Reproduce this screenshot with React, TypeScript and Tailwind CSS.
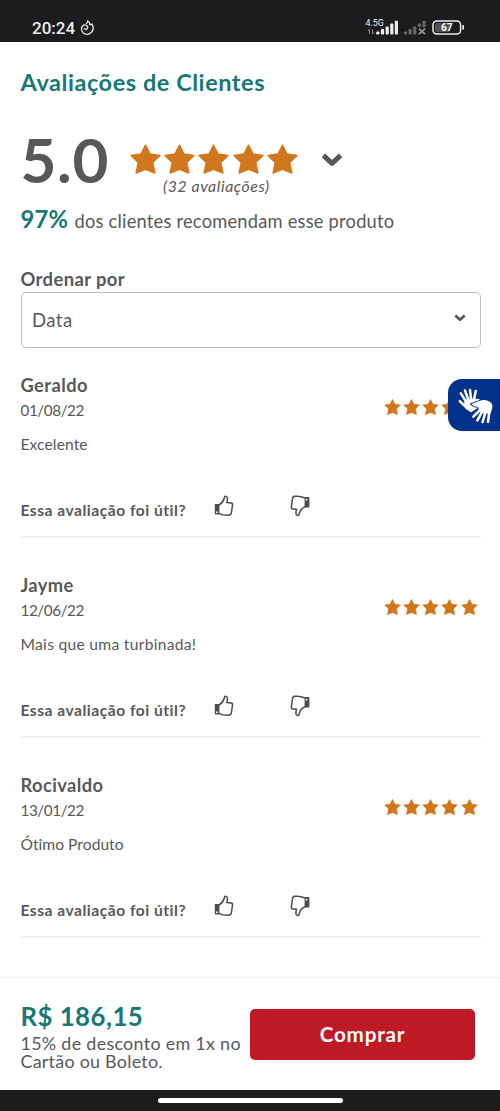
interface Review {
  name: string;
  date: string;
  text: string;
  nameClass: string;
  textClass: string;
}

const reviews: Review[] = [
  { name: "Geraldo", date: "01/08/22", text: "Excelente", nameClass: "tracking-[0.45px]", textClass: "tracking-[0.1px]" },
  { name: "Jayme", date: "12/06/22", text: "Mais que uma turbinada!", nameClass: "tracking-[0.35px]", textClass: "tracking-[0.3px]" },
  { name: "Rocivaldo", date: "13/01/22", text: "Ótimo Produto", nameClass: "tracking-[0.4px]", textClass: "tracking-[0.03px]" },
];

function Star({ className }: { className: string }) {
  return (
    <svg viewBox="0 0 31 30" className={className}>
      <path
        d="M15.5 1 L20.1 10 L30 11.4 L22.8 18.6 L24.9 29 L15.5 25.4 L6.1 29 L8.2 18.6 L1 11.4 L10.9 10 Z"
        fill="currentColor"
        stroke="currentColor"
        strokeWidth="1.4"
        strokeLinejoin="round"
      />
    </svg>
  );
}

function Chevron({ className }: { className: string }) {
  return (
    <svg viewBox="0 0 22 14" className={className} fill="none" stroke="#58585a" strokeWidth="5" strokeLinejoin="round">
      <path d="M2.4 2.4 L11 10.4 L19.6 2.4" />
    </svg>
  );
}

function ThumbUp() {
  return (
    <svg viewBox="0 0 20 22" className="h-[22px] w-5">
      <path
        d="M5 10 C7.4 8.4 9.5 6 10.2 3.2 C10.6 1.3 11.3 1 12.2 1.4 C14 2.2 13.8 4.4 12.8 7.6 L17 7.9 C18.4 8.1 18.7 8.9 18.5 10.2 L17.4 17.6 C17 19.6 16.1 20.4 14.2 20.3 C10.9 20.2 8 19.9 5 18.6"
        fill="none"
        stroke="#4c4c4e"
        strokeWidth="1.5"
        strokeLinejoin="round"
        strokeLinecap="round"
      />
      <rect x="0.8" y="9" width="4.6" height="10.6" rx="0.8" fill="#4c4c4e" />
      <circle cx="3" cy="17.2" r="0.9" fill="#fff" />
    </svg>
  );
}

function ThumbDown() {
  return (
    <svg viewBox="0 0 20 22" className="h-[22px] w-5">
      <path
        d="M15 3 C11.8 1.5 8.5 1.1 5.2 1.3 C3.5 1.4 2.8 2 2.5 3.6 L1.4 11.6 C1.2 13.2 1.7 13.8 3 13.9 L6.6 14.2 C5.7 17 5.6 19.6 7.2 20.4 C8.6 20.9 9 20 9.4 18.2 C10 15.5 12.3 13 15 11.8"
        fill="none"
        stroke="#4c4c4e"
        strokeWidth="1.5"
        strokeLinejoin="round"
        strokeLinecap="round"
      />
      <rect x="14.6" y="2" width="4.8" height="10.6" rx="0.8" fill="#4c4c4e" />
      <circle cx="16.6" cy="4.6" r="0.9" fill="#fff" />
    </svg>
  );
}

function SigningHands() {
  return (
    <svg viewBox="452 383 44 44" className="size-11" stroke="#fff" strokeLinecap="round" strokeLinejoin="round" fill="none">
      <g strokeWidth="2.5">
        <path d="M460.8 393.4 L466.4 402" />
        <path d="M465 390.5 L468.8 401" />
        <path d="M470 390 L471.2 400.5" />
        <path d="M475.8 391 L473.6 401" />
        <path d="M459.8 401.2 L467 408" />
      </g>
      <path d="M464.5 402 L467 399.5 L475 399 L479.5 399.6 L471.5 402.4 L469.8 404.5 L472 406.2 L477 408 L471 412 L466 408.6 Z" fill="#fff" strokeWidth="0.8" />
      <path
        d="M472 404.2 C474.9 403.9 477 402 480 401.2 C484.5 399.7 489.5 401 491.4 404 C492.6 407 491.4 410 490 413 L481 413 L478.5 407.4 C476 407 473.8 406 472 404.2 Z"
        fill="#fff"
        strokeWidth="1.1"
      />
      <path d="M470.5 403.2 C472 406.8 475 407.4 478 407.3" stroke="#02328c" strokeWidth="0.8" />
      <g strokeWidth="2.6">
        <path d="M481.5 408.5 L473.4 416.6" />
        <path d="M483 410 L477.4 420.4" />
        <path d="M486 410.5 L482.6 422" />
        <path d="M489.6 410 L488 421.8" />
      </g>
    </svg>
  );
}

function StatusBar() {
  return (
    <header className="flex h-[42px] shrink-0 items-start bg-[#1c1c1e] pl-8 pt-[18px] text-[#ececee]">
      <span className="h-5 w-[48px] font-[Roboto] text-[17px] font-medium leading-5">20:24</span>
      <svg viewBox="0 0 14 16" className="mt-[1.5px] h-4 w-3.5" fill="none" stroke="#ececee" strokeWidth="1.3" strokeLinecap="round">
        <path d="M6.4 3.4 C7.4 2.8 7.8 2 7.7 1 C9.8 2 10 3.6 9.7 4.6 C10.8 4.8 11.4 4.5 12 4.1 C13.8 7.2 13.4 10.4 11.2 12.5 C8.4 15.3 4.6 15 2.6 12.2 C0.8 9.4 1.2 6.2 3.8 5.2 C6 4.4 8 5.9 7.7 7.9 C7.4 9.5 5.2 9.9 4.4 8.6" />
      </svg>
      <svg viewBox="0 0 100 18" className="ml-[271px] h-[18px] w-[100px]">
        <text x="0.5" y="8" fontFamily="Roboto" fontSize="8.8" fill="#ececee">4.5G</text>
        <g stroke="#858588" strokeWidth="1" fill="none">
          <path d="M4.5 16 V11.5 M3 13 L4.5 11.2 M7.5 11.2 V16 M9 14.5 L7.5 16" />
        </g>
        <g fill="#ececee">
          <rect x="11.2" y="13.4" width="3.2" height="3.2" rx="0.8" />
          <rect x="15.9" y="11" width="3.2" height="5.6" rx="0.8" />
          <rect x="20.6" y="8.5" width="3.2" height="8.1" rx="0.8" />
          <rect x="25.2" y="5.5" width="3.2" height="11.1" rx="0.8" />
          <rect x="29.8" y="2.8" width="3.2" height="13.8" rx="0.8" />
        </g>
        <g fill="#66666a">
          <rect x="38.9" y="13.4" width="3.2" height="3.2" rx="0.8" />
          <rect x="43.5" y="11" width="3.2" height="5.6" rx="0.8" />
          <rect x="48.1" y="8.5" width="3.2" height="8.1" rx="0.8" />
          <rect x="52.8" y="5.5" width="3.2" height="3.4" rx="0.8" />
          <rect x="57.4" y="2.8" width="3.2" height="6.5" rx="0.8" />
        </g>
        <path d="M54 10.6 L60 16.2 M60 10.6 L54 16.2" stroke="#96969a" strokeWidth="1.7" />
        <rect x="68" y="3" width="27.6" height="13" rx="3.8" fill="none" stroke="#ececee" strokeWidth="1.5" />
        <rect x="70" y="5" width="15" height="9" rx="1.8" fill="#505054" />
        <rect x="97.3" y="7" width="1.7" height="4.8" rx="0.8" fill="#ececee" />
        <text x="81.8" y="13.2" textAnchor="middle" fontFamily="Roboto" fontWeight="700" fontSize="10.2" fill="#fff">67</text>
      </svg>
    </header>
  );
}

function ReviewItem({ review }: { review: Review }) {
  return (
    <article className="h-[200px] border-b-2 border-[#f0f0f0] pt-[35.5px]">
      <div className="flex justify-between">
        <div>
          <h3 className={`h-[26.5px] text-[18.3px] font-bold leading-[22px] ${review.nameClass}`}>{review.name}</h3>
          <p className="h-[34px] text-[15.3px] leading-5 tracking-[-0.45px]">{review.date}</p>
        </div>
        <div className="mr-[3px] mt-[25px] flex gap-[2.1px] text-[#d1771c]">
          {[0, 1, 2, 3, 4].map((n) => (
            <Star key={n} className="h-4 w-[17px]" />
          ))}
        </div>
      </div>
      <p className={`text-[15.6px] leading-5 ${review.textClass}`}>{review.text}</p>
      <div className="mt-[41px] flex items-start">
        <span className="mt-[5px] w-[193.5px] whitespace-nowrap text-[15.6px] font-bold leading-5 tracking-[0.5px]">
          Essa avaliação foi útil?
        </span>
        <button className="mr-14 block"><ThumbUp /></button>
        <button className="block"><ThumbDown /></button>
      </div>
    </article>
  );
}

export default function App() {
  return (
    <div className="relative flex h-[1111px] w-[500px] flex-col overflow-hidden bg-white font-[Lato,sans-serif] text-[#58585a]">
      <StatusBar />
      <main className="flex-1 pl-[20.5px] pr-[19.5px]">
        <h1 className="mt-[26px] h-[61px] whitespace-nowrap text-[23.5px] font-bold leading-7 tracking-[0.55px] text-[#177876]">
          Avaliações de Clientes
        </h1>
        <div className="flex h-[76px]">
          <span className="w-[109px] text-[62px] font-bold leading-[60px] tracking-[0.6px]">5.0</span>
          <div className="w-[172px] pt-[15px]">
            <div className="flex gap-[3.4px] text-[#d1771c]">
              {[0, 1, 2, 3, 4].map((n) => (
                <Star key={n} className="h-[30px] w-[31px]" />
              ))}
            </div>
            <p className="mt-[3px] pl-[33.5px] text-[15.8px] italic leading-[18px] tracking-[0.6px]">(32 avaliações)</p>
          </div>
          <Chevron className="ml-[19.5px] mt-[24px] h-[14px] w-[22px]" />
        </div>
        <p className="flex h-[63px] items-baseline whitespace-nowrap leading-7">
          <b className="w-[54px] text-[23.8px] tracking-[0.2px] text-[#177876]">97%</b>
          <span className="text-[18.3px] tracking-[0.22px]">dos clientes recomendam esse produto</span>
        </p>
        <label className="block h-6 pt-px text-[18.4px] font-bold leading-5 tracking-[0.4px]">Ordenar por</label>
        <div className="flex h-14 items-center justify-between rounded-[5px] border border-[#bdbdbf] pl-[10.5px] pr-[13.5px]">
          <span className="pt-px text-[18.6px] tracking-[0.4px]">Data</span>
          <Chevron className="mb-1 h-[8px] w-[12px]" />
        </div>
        <section className="-mt-2.5">
          {reviews.map((r) => (
            <ReviewItem key={r.name} review={r} />
          ))}
        </section>
      </main>
      <footer className="flex h-[113px] shrink-0 border-t border-[#ebebeb] pl-[20.5px] pt-[23px]">
        <div className="w-[229.5px] whitespace-nowrap text-[17.9px] leading-[18px]">
          <p className="h-[33px] text-[25.8px] font-bold leading-[30px] tracking-[0.45px] text-[#177876]">R$ 186,15</p>
          <p className="tracking-[0.3px]">15% de desconto em 1x no</p>
          <p className="tracking-[0.25px]">Cartão ou Boleto.</p>
        </div>
        <button className="mt-[7.5px] h-[51px] w-[225px] rounded-[5px] bg-[#c01926] text-[20.6px] font-bold tracking-[0.8px] text-white">
          Comprar
        </button>
      </footer>
      <nav className="flex h-[21px] shrink-0 justify-center bg-[#1c1c1e] pt-2">
        <div className="h-[5px] w-[185px] rounded-full bg-white" />
      </nav>
      <div className="absolute right-0 top-[379px] flex h-[52px] w-[52px] items-center justify-center rounded-l-[14px] bg-[#02328c]">
        <SigningHands />
      </div>
    </div>
  );
}
